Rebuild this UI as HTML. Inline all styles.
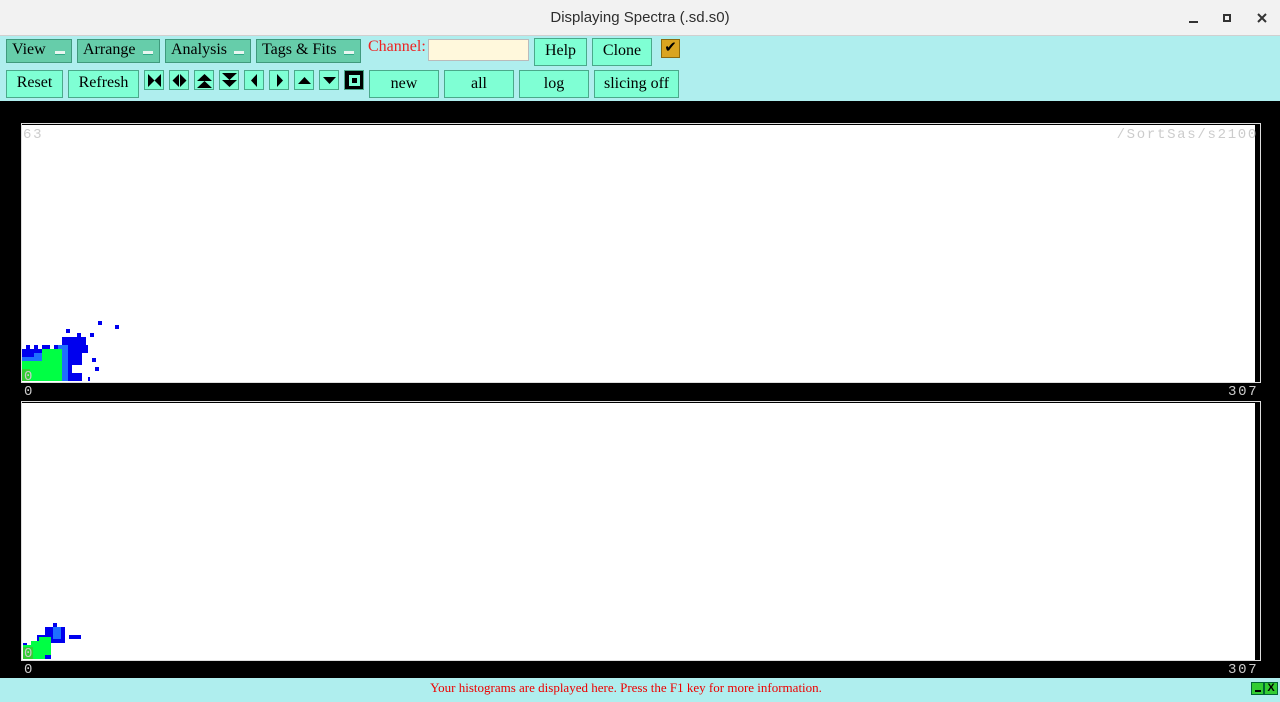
<!DOCTYPE html>
<html><head><style>
body{margin:0;width:1280px;height:702px;overflow:hidden;background:#000;font-family:"Liberation Serif",serif;position:relative}
.a{position:absolute}
.title{left:0;top:0;width:1280px;height:36px;background:#f2f2f2;border-bottom:1px solid #d0d0d0;box-sizing:border-box;font-family:"Liberation Sans",sans-serif;font-size:15px;color:#2e2e2e;text-align:center;line-height:36px}
.tb{left:0;top:36px;width:1280px;height:65px;background:#afeeee}
.mb{position:absolute;top:39px;height:24px;background:#66cdaa;border:1px solid #3f9a7d;box-sizing:border-box;font-size:16px;line-height:20px;padding-left:5px;color:#000}
.mb i{position:absolute;right:6px;top:11px;width:10px;height:3px;background:#e8f5f0;border-bottom:1px solid #3a8}
.bt{position:absolute;height:28px;background:#7fffd4;border:1px solid #4aa98a;box-sizing:border-box;font-size:16px;text-align:center;line-height:24px}
.ib{position:absolute;top:70px;width:20px;height:20px;background:#7fffd4;border:1px solid #4aa98a;box-sizing:border-box}
.ib svg{position:absolute;left:1px;top:1px}
.plot{left:21px;width:1240px;border:1px solid #ddd;box-sizing:border-box;background:#000}
.wh{position:absolute;left:0;top:1px;width:1233px;background:#fff}
.lb{font-family:"Liberation Mono",monospace;font-size:14px;color:#ccc;letter-spacing:1.7px}
.st{left:0;top:678px;width:1252px;height:24px;background:#afeeee;color:#e00;font-size:13px;text-align:center;line-height:20px}
</style></head><body>
<div class="a title">Displaying Spectra (.sd.s0)
<svg class="a" style="left:1185px;top:10px" width="90" height="16"><rect x="4" y="11" width="9" height="2" fill="#333"/><rect x="39" y="5" width="6" height="6" fill="none" stroke="#333" stroke-width="2"/><path d="M73 4l8 8M81 4l-8 8" stroke="#333" stroke-width="2"/></svg></div>
<div class="a tb"></div>
<div class="a" style="left:1252px;top:678px;width:28px;height:24px;background:#afeeee"></div>
<div class="mb" style="left:6px;width:66px">View<i></i></div>
<div class="mb" style="left:77px;width:83px">Arrange<i></i></div>
<div class="mb" style="left:165px;width:86px">Analysis<i></i></div>
<div class="mb" style="left:256px;width:105px">Tags &amp; Fits<i></i></div>
<div class="a" style="left:368px;top:38px;color:#e22;font-size:16px">Channel:</div>
<div class="a" style="left:428px;top:39px;width:101px;height:22px;background:#fff8dc;border:1px solid #bbb;box-sizing:border-box"></div>
<div class="bt" style="left:534px;top:38px;width:53px">Help</div>
<div class="bt" style="left:592px;top:38px;width:60px">Clone</div>
<div class="a" style="left:661px;top:39px;width:19px;height:19px;background:#daa520;border:1px solid #8a6a10;box-sizing:border-box;font-size:15px;line-height:16px;text-align:center">✔</div>
<div class="bt" style="left:6px;top:70px;width:57px">Reset</div>
<div class="bt" style="left:68px;top:70px;width:71px">Refresh</div>
<div class="ib" style="left:144px"><svg width="17" height="17"><path d="M2 2v13l6.5-6.5zM15 2v13l-6.5-6.5z"/></svg></div>
<div class="ib" style="left:169px"><svg width="17" height="17"><path d="M8 2v13l-6.5-6.5zM9 2v13l6.5-6.5z"/></svg></div>
<div class="ib" style="left:194px"><svg width="17" height="17"><path d="M1 9h15l-7.5-7zM1 16h15l-7.5-7z"/></svg></div>
<div class="ib" style="left:219px"><svg width="17" height="17"><path d="M1 1h15l-7.5 7zM1 8h15l-7.5 7z"/></svg></div>
<div class="ib" style="left:244px"><svg width="17" height="17"><path d="M11 2v13l-6-6.5z"/></svg></div>
<div class="ib" style="left:269px"><svg width="17" height="17"><path d="M6 2v13l6-6.5z"/></svg></div>
<div class="ib" style="left:294px"><svg width="17" height="17"><path d="M2 12h13l-6.5-7z"/></svg></div>
<div class="ib" style="left:319px"><svg width="17" height="17"><path d="M2 5h13l-6.5 7z"/></svg></div>
<div class="ib" style="left:344px;background:#000"><svg width="17" height="17"><rect x="3" y="3" width="11" height="11" fill="#7fffd4"/><rect x="6" y="6" width="5" height="5" fill="#000"/></svg></div>
<div class="bt" style="left:369px;top:70px;width:70px;line-height:26px">new</div>
<div class="bt" style="left:444px;top:70px;width:70px;line-height:26px">all</div>
<div class="bt" style="left:519px;top:70px;width:70px;line-height:26px">log</div>
<div class="bt" style="left:594px;top:70px;width:85px;line-height:26px">slicing off</div>

<div class="a plot" style="top:123px;height:260px"><div class="wh" style="height:257px"></div>
<div class="a lb" style="left:1px;top:3px">63</div>
<div class="a lb" style="right:2px;top:3px">/SortSas/s2100</div>
<svg class="a" style="left:0;top:0" width="120" height="260">
<g fill="#0000ee"><rect x="76" y="197" width="4" height="4"/><rect x="93" y="201" width="4" height="4"/><rect x="44" y="205" width="4" height="4"/><rect x="55" y="209" width="4" height="4"/><rect x="68" y="209" width="4" height="4"/><rect x="40" y="213" width="24" height="12"/><rect x="0" y="221" width="66" height="36"/><rect x="53" y="229" width="12" height="4"/><rect x="70" y="234" width="4" height="4"/><rect x="58" y="243" width="4" height="4"/><rect x="73" y="243" width="4" height="4"/><rect x="61" y="250" width="4" height="4"/><rect x="50" y="253" width="18" height="4"/></g>
<g fill="#fff"><rect x="0" y="221" width="4" height="4"/><rect x="8" y="221" width="4" height="4"/><rect x="16" y="221" width="4" height="4"/><rect x="28" y="221" width="4" height="4"/><rect x="60" y="229" width="6" height="28"/><rect x="50" y="241" width="16" height="8"/></g>
<g fill="#1e6fff"><rect x="36" y="221" width="10" height="36"/><rect x="12" y="229" width="8" height="4"/><rect x="0" y="233" width="20" height="4"/></g>
<path d="M20 225h20v32H0v-20h20z" fill="#00ff44"/>
<rect x="0" y="245" width="8" height="12" fill="#33cc33"/>
<text x="2" y="256" font-family="Liberation Mono" font-size="14" fill="#ccc">0</text>
</svg>
</div>
<div class="a lb" style="left:24px;top:384px">0</div>
<div class="a lb" style="left:1228px;top:384px">307</div>

<div class="a plot" style="top:401px;height:260px"><div class="wh" style="height:257px"></div>
<svg class="a" style="left:0;top:0" width="80" height="260">
<g fill="#0000ee"><rect x="31" y="221" width="4" height="4"/><rect x="23" y="225" width="20" height="16"/><rect x="47" y="233" width="12" height="4"/><rect x="15" y="233" width="12" height="8"/><rect x="1" y="241" width="4" height="4"/><rect x="1" y="245" width="28" height="12"/><rect x="39" y="237" width="4" height="4"/></g>
<rect x="31" y="225" width="8" height="12" fill="#1e6fff"/>
<path d="M1 243h8v-4h8v-4h12v18h-6v4H1z" fill="#00ff44"/>
<rect x="1" y="245" width="10" height="12" fill="#33cc33"/>
<text x="2" y="255" font-family="Liberation Mono" font-size="14" fill="#ccc">0</text>
</svg>
</div>
<div class="a lb" style="left:24px;top:662px">0</div>
<div class="a lb" style="left:1228px;top:662px">307</div>

<div class="a st">Your histograms are displayed here. Press the F1 key for more information.</div>
<div class="a" style="left:1251px;top:682px;width:13px;height:13px;background:#3c3;border:1px solid #063;box-sizing:border-box"><div class="a" style="left:3px;top:7px;width:6px;height:2px;background:#000"></div></div>
<div class="a" style="left:1264px;top:682px;width:14px;height:13px;background:#3c3;border:1px solid #063;box-sizing:border-box;font:bold 11px 'Liberation Sans',sans-serif;line-height:11px;text-align:center">X</div>
</body></html>
